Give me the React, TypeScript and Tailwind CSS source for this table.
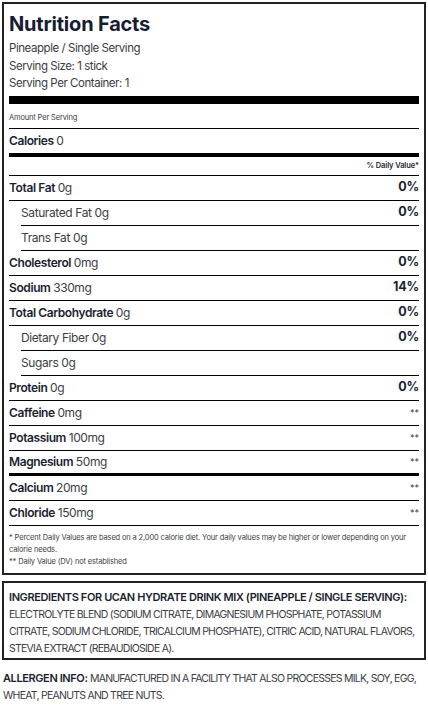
const rows: {
    label: string;
    amount: string;
    dv?: string;
    sub?: boolean;
    thick?: boolean;
}[] = [
    { label: 'Total Fat', amount: '0g', dv: '0%' },
    { label: 'Saturated Fat', amount: '0g', dv: '0%', sub: true },
    { label: 'Trans Fat', amount: '0g', sub: true },
    { label: 'Cholesterol', amount: '0mg', dv: '0%' },
    { label: 'Sodium', amount: '330mg', dv: '14%' },
    { label: 'Total Carbohydrate', amount: '0g', dv: '0%' },
    { label: 'Dietary Fiber', amount: '0g', dv: '0%', sub: true },
    { label: 'Sugars', amount: '0g', sub: true },
    { label: 'Protein', amount: '0g', dv: '0%' },
    { label: 'Caffeine', amount: '0mg', dv: '**' },
    { label: 'Potassium', amount: '100mg', dv: '**' },
    { label: 'Magnesium', amount: '50mg', dv: '**', thick: true },
    { label: 'Calcium', amount: '20mg', dv: '**' },
    { label: 'Chloride', amount: '150mg', dv: '**' },
];

function NutrientRow({ label, amount, dv, sub, thick }: (typeof rows)[number]) {
    // sub rows are indented, so their rule starts further in too
    return (
        <div
            className={`flex h-[25px] items-center justify-between border-black ${
                sub ? 'ml-[12px]' : ''
            } ${thick ? 'border-b-[3px]' : 'border-b'}`}
        >
            <p className="text-[12px] tracking-[-0.4px] text-[#3b3d45]">
                {sub ? (
                    <span>{label} </span>
                ) : (
                    <span className="font-semibold text-[#1b1f30]">{label} </span>
                )}
                {amount}
            </p>
            {dv === '**' ? (
                <span className="text-[9px] text-[#3b3d45]">**</span>
            ) : (
                dv && (
                    <span className="text-[12.5px] font-bold tracking-[-0.2px] text-[#1b1f30]">
                        {dv}
                    </span>
                )
            )}
        </div>
    );
}

export default function App() {
    return (
        <main className="bg-white p-[2px] font-['Inter',sans-serif] text-[#1b1f30]">
            {/* Label panel */}
            <section className="border-2 border-[#222] px-[5px] pt-[4px] pb-[5px]">
                <h1 className="text-[20px] font-bold leading-[32px] tracking-[-0.2px] text-[#171c33]">
                    Nutrition Facts
                </h1>
                <div className="text-[11.5px] leading-[17.5px] tracking-[-0.45px] text-[#3b3d45]">
                    <p>Pineapple / Single Serving</p>
                    <p>Serving Size: 1 stick</p>
                    <p>Serving Per Container: 1</p>
                </div>
                <div className="mt-[3px] h-[8px] bg-black"></div>
                <div className="flex h-[25px] items-center border-b border-black pt-[4px] text-[7.5px] tracking-[-0.15px] text-[#3b3d45]">
                    Amount Per Serving
                </div>
                <div className="flex h-[28px] items-center border-b-[4px] border-black">
                    <p className="text-[12px] tracking-[-0.4px] text-[#3b3d45]">
                        <span className="font-semibold text-[#1b1f30]">Calories </span>0
                    </p>
                </div>
                <div className="flex h-[19px] items-center justify-end border-b border-black text-[7.5px] font-semibold tracking-[-0.1px]">
                    % Daily Value*
                </div>
                {rows.map((row) => (
                    <NutrientRow key={row.label} {...row} />
                ))}
                <div className="pt-[6px] text-[7.5px] leading-[12px] tracking-[-0.15px] text-[#3b3d45]">
                    <p>
                        * Percent Daily Values are based on a 2,000 calorie diet. Your daily values
                        may be higher or lower depending on your calorie needs.
                    </p>
                    <p>** Daily Value (DV) not established</p>
                </div>
            </section>

            {/* Ingredients */}
            <section className="mt-[6px] border-2 border-[#222] px-[5px] pt-[6px] pb-[1px] text-[10.5px] leading-[17px] tracking-[-0.75px] text-[#3b3d45]">
                <p className="text-[11px] font-semibold tracking-[-0.4px] text-[#1b1f30]">
                    INGREDIENTS FOR UCAN HYDRATE DRINK MIX (PINEAPPLE / SINGLE SERVING):
                </p>
                <p>ELECTROLYTE BLEND (SODIUM CITRATE, DIMAGNESIUM PHOSPHATE, POTASSIUM</p>
                <p>
                    CITRATE, SODIUM CHLORIDE, TRICALCIUM PHOSPHATE), CITRIC ACID, NATURAL FLAVORS,
                </p>
                <p>STEVIA EXTRACT (REBAUDIOSIDE A).</p>
            </section>

            <div className="mt-[10px] pl-[1px] text-[10.5px] leading-[17px] tracking-[-0.75px] text-[#3b3d45]">
                <p>
                    <span className="text-[11px] font-semibold tracking-[-0.4px] text-[#1b1f30]">
                        ALLERGEN INFO:{' '}
                    </span>
                    MANUFACTURED IN A FACILITY THAT ALSO PROCESSES MILK, SOY, EGG,
                </p>
                <p>WHEAT, PEANUTS AND TREE NUTS.</p>
            </div>
        </main>
    );
}
